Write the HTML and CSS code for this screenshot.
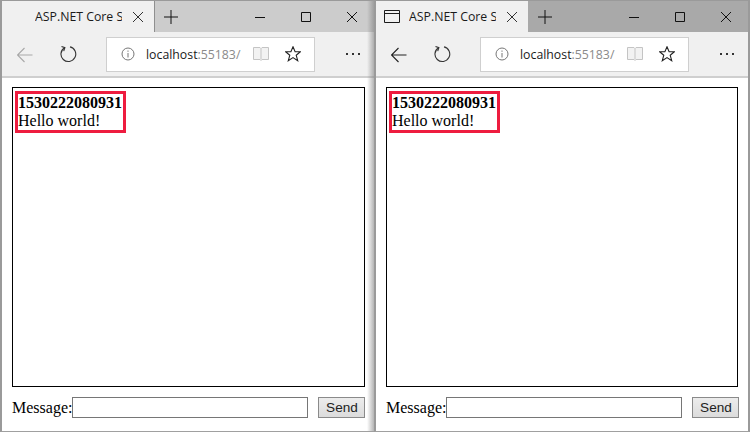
FILE: index.html
```html
<!DOCTYPE html>
<html lang="en">
<head>
<meta charset="utf-8">
<title>SignalR windows</title>
<link rel="stylesheet" href="styles.css">
</head>
<body>
<main class="desktop">
  <section class="window window-left">
    <header class="tabstrip">
      <div class="tab">
        <span class="tab-title">ASP.NET Core SignalR</span>
        <svg class="tab-close" width="12" height="12" viewBox="0 0 12 12"><path d="M1 1l10 10M11 1L1 11"/></svg>
      </div>
      <svg class="new-tab" width="14" height="14" viewBox="0 0 14 14"><path d="M7 0v14M0 7h14"/></svg>
      <div class="caption">
        <svg class="cap" width="12" height="12" viewBox="0 0 12 12"><path d="M1 6.500h10"/></svg>
        <svg class="cap" width="12" height="12" viewBox="0 0 12 12"><path d="M1.500 1.500h9v9h-9z"/></svg>
        <svg class="cap" width="12" height="12" viewBox="0 0 12 12"><path d="M1 1l10 10M11 1L1 11"/></svg>
      </div>
    </header>
    <nav class="toolbar">
      <svg class="tool back disabled" width="16" height="16" viewBox="0 0 16 16"><path d="M.5 8h15M7.500 1L.5 8l7 7"/></svg>
      <svg class="tool refresh" width="18" height="18" viewBox="0 0 18 18"><path d="M5.500 2.800A7.400 7.400 0 1 0 11 1.900M2.500 1.500l3.400 1.200-1.200 3.400" /></svg>
      <div class="address">
        <svg class="info" width="14" height="14" viewBox="0 0 14 14"><circle cx="7" cy="7" r="6"/><path d="M7 6v4.500M7 3.500v1.300"/></svg>
        <span class="url">localhost<span class="port">:55183/</span></span>
        <svg class="book" width="16" height="16" viewBox="0 0 16 16"><path d="M.5 1.500h6.500l1 1 1-1h6.500v12h-6.500l-1 1-1-1H.5zM8 2.500v11"/></svg>
        <svg class="star" width="16" height="16" viewBox="0 0 16 16"><path d="M8 .8l2.100 5h5.300l-4.200 3.400 1.500 5.500L8 11.600l-4.700 3.100 1.500-5.500L.6 5.800h5.300z"/></svg>
      </div>
      <div class="more"><i></i><i></i><i></i></div>
    </nav>
    <div class="page">
      <div class="messages">
        <div class="message"><b>1530222080931</b><br>Hello world!</div>
      </div>
      <div class="sendbar">
        <label class="msg-label">Message:</label>
        <input class="msg-input" type="text">
        <button class="send" type="button">Send</button>
      </div>
    </div>
  </section>
  <section class="window window-right">
    <header class="tabstrip">
      <div class="tab">
        <svg class="favicon" width="16" height="13" viewBox="0 0 16 13"><path d="M.5.500h15v12H.5zM.5 3.500h15"/></svg>
        <span class="tab-title">ASP.NET Core SignalR</span>
        <svg class="tab-close" width="12" height="12" viewBox="0 0 12 12"><path d="M1 1l10 10M11 1L1 11"/></svg>
      </div>
      <svg class="new-tab" width="14" height="14" viewBox="0 0 14 14"><path d="M7 0v14M0 7h14"/></svg>
      <div class="caption">
        <svg class="cap" width="12" height="12" viewBox="0 0 12 12"><path d="M1 6.500h10"/></svg>
        <svg class="cap" width="12" height="12" viewBox="0 0 12 12"><path d="M1.500 1.500h9v9h-9z"/></svg>
        <svg class="cap" width="12" height="12" viewBox="0 0 12 12"><path d="M1 1l10 10M11 1L1 11"/></svg>
      </div>
    </header>
    <nav class="toolbar">
      <svg class="tool back" width="16" height="16" viewBox="0 0 16 16"><path d="M.5 8h15M7.500 1L.5 8l7 7"/></svg>
      <svg class="tool refresh" width="18" height="18" viewBox="0 0 18 18"><path d="M5.500 2.800A7.400 7.400 0 1 0 11 1.900M2.500 1.500l3.400 1.200-1.200 3.400" /></svg>
      <div class="address">
        <svg class="info" width="14" height="14" viewBox="0 0 14 14"><circle cx="7" cy="7" r="6"/><path d="M7 6v4.500M7 3.500v1.300"/></svg>
        <span class="url">localhost<span class="port">:55183/</span></span>
        <svg class="book" width="16" height="16" viewBox="0 0 16 16"><path d="M.5 1.500h6.500l1 1 1-1h6.500v12h-6.500l-1 1-1-1H.5zM8 2.500v11"/></svg>
        <svg class="star" width="16" height="16" viewBox="0 0 16 16"><path d="M8 .8l2.100 5h5.300l-4.200 3.400 1.500 5.500L8 11.600l-4.700 3.100 1.500-5.500L.6 5.800h5.300z"/></svg>
      </div>
      <div class="more"><i></i><i></i><i></i></div>
    </nav>
    <div class="page">
      <div class="messages">
        <div class="message"><b>1530222080931</b><br>Hello world!</div>
      </div>
      <div class="sendbar">
        <label class="msg-label">Message:</label>
        <input class="msg-input" type="text">
        <button class="send" type="button">Send</button>
      </div>
    </div>
  </section>
</main>
</body>
</html>
```

FILE: styles.css
```css
* { box-sizing: border-box; }
html, body { margin: 0; padding: 0; background: #fff; }
body { width: 750px; height: 432px; overflow: hidden; }
.desktop { display: flex; width: 750px; height: 432px; }
.window {
  display: flex;
  flex-direction: column;
  height: 432px;
  border-top: 1px solid #9a9a9a;
  border-bottom: 1px solid #a0a0a0;
  background: #fff;
}
.window-left { width: 374px; border-left: 2px solid #9a9a9a; position: relative; }
.window-left::after {
  content: "";
  position: absolute;
  top: 0;
  bottom: 0;
  right: 0;
  width: 7px;
  background: linear-gradient(to right, rgba(120,120,120,0), rgba(120,120,120,.55));
}
.window-right { width: 376px; border-left: 2px solid #9a9a9a; border-right: 2px solid #9a9a9a; }
.tabstrip { display: flex; align-items: center; height: 31px; flex: none; background: #cccccc; }
.window-right .tabstrip { background: #a9a9a9; }
.tab {
  display: flex;
  align-items: center;
  width: 153px;
  height: 31px;
  padding-left: 33px;
  background: #f0f0f0;
  flex: none;
}
.window-left .tab { border-right: 1px solid #8f8f8f; }
.window-right .tab { width: 152px; padding-left: 8px; }
.favicon { flex: none; margin-right: 9px; fill: none; stroke: #1a1a1a; }
.tab-title {
  width: 87px;
  flex: none;
  overflow: hidden;
  white-space: nowrap;
  font: 12.300px "Open Sans", "Noto Sans", sans-serif;
  color: #1a1a1a;
}
.tab-close { flex: none; margin-left: 10px; fill: none; stroke: #333; stroke-width: 1; }
.new-tab { flex: none; margin-left: 9px; fill: none; stroke: #111; stroke-width: 1; }
.window-right .new-tab { margin-left: 10px; }
.caption { display: flex; align-items: center; margin-left: auto; padding-right: 16px; gap: 34px; }
.cap { fill: none; stroke: #111; stroke-width: 1; }
.toolbar { display: flex; align-items: center; height: 46px; flex: none; background: #f0f0f0; border-bottom: 2px solid #cfcfcf; padding-left: 15px; }
.tool { flex: none; fill: none; stroke: #222; stroke-width: 1.100; }
.back { margin-top: 2px; }
.back.disabled { stroke: #a8a8a8; }
.refresh { margin-left: 26px; stroke: #333; }
.address {
  display: flex;
  align-items: center;
  width: 209px;
  height: 35px;
  margin-left: 29px;
  padding-left: 14px;
  background: #fff;
  border: 1px solid #cfcfcf;
}
.info { flex: none; fill: none; stroke: #777; stroke-width: 1; }
.url { width: 107px; margin-left: 11px; font: 12.300px "Open Sans", "Noto Sans", sans-serif; color: #1a1a1a; white-space: nowrap; flex: none; }
.port { color: #8a8a8a; }
.book { flex: none; fill: #f2f2f2; stroke: #c4c4c4; }
.star { flex: none; margin-left: 16px; fill: none; stroke: #222; stroke-width: 1.100; }
.more { display: flex; gap: 4px; margin-left: 31px; }
.more i { width: 2px; height: 2px; background: #333; }
.page { flex: 1; display: flex; flex-direction: column; padding: 9px 10px 0 10px; }
.window-left .page { padding-right: 9px; }
.messages { height: 300px; flex: none; border: 1px solid #000; padding: 3px 0 0 2px; }
.message {
  width: fit-content;
  border: 3px solid #ee1c3f;
  padding: 0 1px 0 0;
  font: 16px/18px "Liberation Serif", serif;
  color: #000;
}
.sendbar { display: flex; align-items: center; margin-top: 10px; }
.msg-label { font: 16px "Liberation Serif", serif; color: #000; }
.msg-input { width: 236px; height: 21px; flex: none; padding: 0; background: #fff; border: 1px solid #767676; border-radius: 0; }
.send {
  width: 47px;
  height: 21px;
  flex: none;
  margin-left: 10px;
  padding: 0;
  font: 13.600px "Liberation Sans", sans-serif;
  color: #222;
  background: linear-gradient(#ececec, #dcdcdc);
  border: 1px solid #8a8a8a;
  border-radius: 0;
}
```
